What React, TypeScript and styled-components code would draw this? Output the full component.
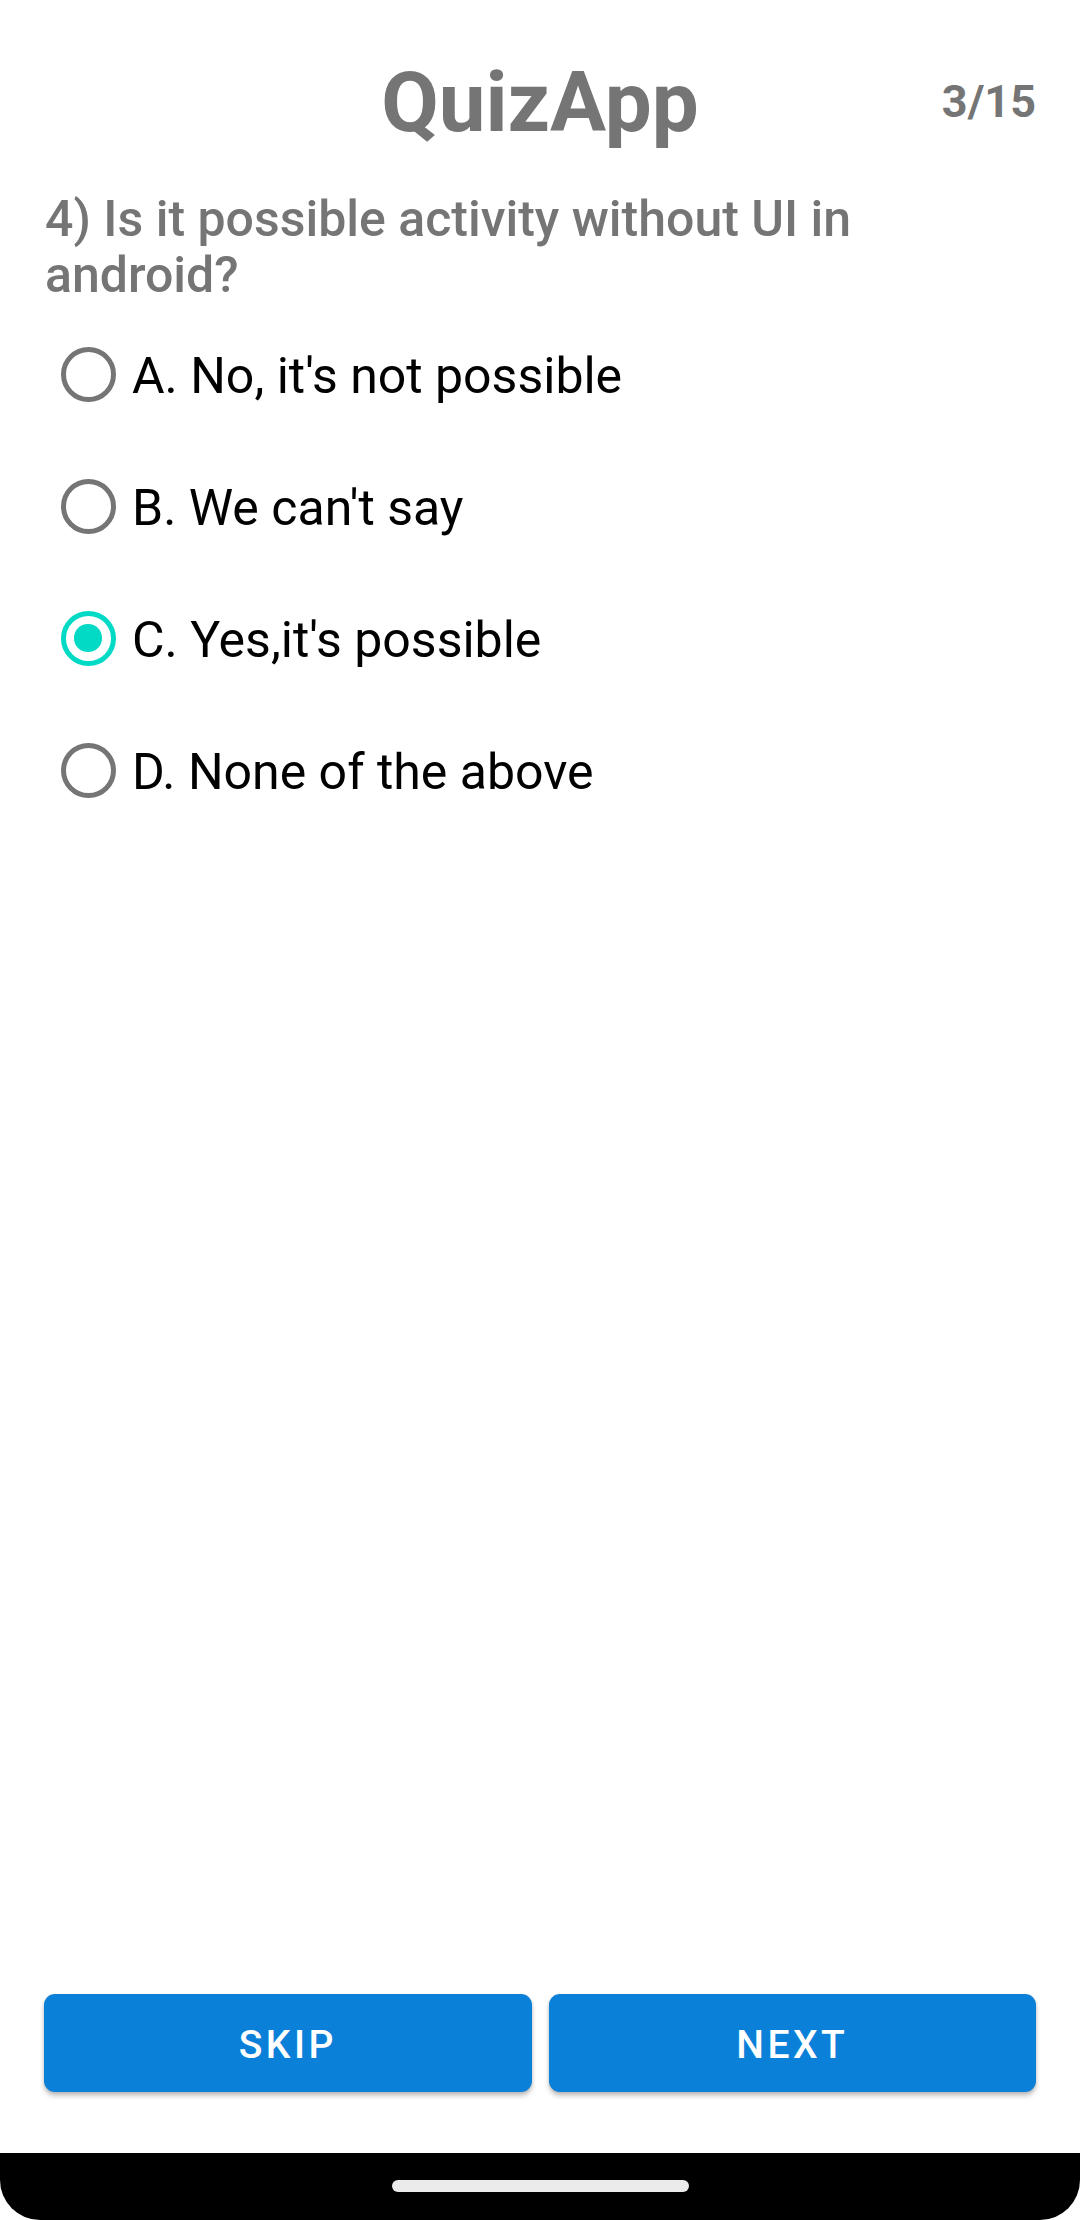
import React, { useState } from "react";
import styled, { createGlobalStyle } from "styled-components";

const Global = createGlobalStyle`
  html, body { margin: 0; padding: 0; background: #ffffff; }
  body { font-family: Roboto, "Noto Sans", "Liberation Sans", sans-serif; }
  * { box-sizing: border-box; }
`;

const Screen = styled.div`
  width: 1080px;
  height: 2220px;
  display: flex;
  flex-direction: column;
  background: #ffffff;
  overflow: hidden;
`;

const Header = styled.header`
  display: grid;
  grid-template-columns: 1fr auto 1fr;
  align-items: center;
  padding: 54px 44px 0 44px;
`;

const Title = styled.h1`
  grid-column: 2;
  margin: 0;
  font-size: 83.5px;
  font-weight: 700;
  line-height: 97px;
  color: #757575;
`;

const Counter = styled.span`
  grid-column: 3;
  justify-self: end;
  font-size: 45px;
  font-weight: 700;
  color: #757575;
  margin-bottom: 2px;
`;

const Question = styled.p`
  margin: 40px 44px 0 45px;
  font-size: 50px;
  font-weight: 500;
  line-height: 56px;
  color: #757575;
`;

const Options = styled.div`
  display: flex;
  flex-direction: column;
  margin-top: 5px;
`;

const OptionRow = styled.label`
  display: flex;
  align-items: center;
  height: 132px;
  padding-left: 44px;
  cursor: pointer;
`;

const RadioBox = styled.span`
  width: 88px;
  height: 88px;
  display: flex;
  align-items: center;
  justify-content: center;
  flex: none;
`;

const RadioRing = styled.span<{ $checked: boolean }>`
  width: 55px;
  height: 55px;
  border-radius: 50%;
  border: 5.5px solid ${(p) => (p.$checked ? "#03DAC5" : "#757575")};
  display: flex;
  align-items: center;
  justify-content: center;
`;

const RadioDot = styled.span`
  width: 27.5px;
  height: 27.5px;
  border-radius: 50%;
  background: #03DAC5;
`;

const OptionText = styled.span`
  font-size: 50px;
  font-weight: 400;
  color: #000000;
  padding-top: 4px;
`;

const Spacer = styled.div`
  flex: 1;
`;

const ButtonRow = styled.div`
  display: flex;
  gap: 17px;
  padding: 0 44px;
  margin-bottom: 61px;
`;

const ActionButton = styled.button`
  flex: 1;
  height: 98px;
  padding: 4px 0 0 0;
  border: none;
  border-radius: 11px;
  background: #0B80D8;
  color: #ffffff;
  font-family: Roboto, "Noto Sans", sans-serif;
  font-size: 39px;
  font-weight: 500;
  letter-spacing: 0.0892em;
  text-transform: uppercase;
  box-shadow: 0 4px 5px rgba(0, 0, 0, 0.22), 0 1px 3px rgba(0, 0, 0, 0.12);
  cursor: pointer;
`;

const NavBar = styled.div`
  height: 67px;
  background: #000000;
  border-radius: 0 0 40px 40px;
  display: flex;
  justify-content: center;
  padding-top: 27px;
`;

const HomePill = styled.span`
  width: 297px;
  height: 12px;
  border-radius: 6px;
  background: #ebebeb;
`;

const options = [
  "A. No, it's not possible",
  "B. We can't say",
  "C. Yes,it's possible",
  "D. None of the above",
];

export default function App() {
  const [selected, setSelected] = useState(2);
  return (
    <>
      <Global />
      <Screen>
        <Header>
          <Title>QuizApp</Title>
          <Counter>3/15</Counter>
        </Header>
        <Question>4) Is it possible activity without UI in android?</Question>
        <Options>
          {options.map((o, i) => (
            <OptionRow key={o} onClick={() => setSelected(i)}>
              <RadioBox>
                <RadioRing $checked={selected === i}>
                  {selected === i && <RadioDot />}
                </RadioRing>
              </RadioBox>
              <OptionText>{o}</OptionText>
            </OptionRow>
          ))}
        </Options>
        <Spacer />
        <ButtonRow>
          <ActionButton>Skip</ActionButton>
          <ActionButton>Next</ActionButton>
        </ButtonRow>
        <NavBar>
          <HomePill />
        </NavBar>
      </Screen>
    </>
  );
}
